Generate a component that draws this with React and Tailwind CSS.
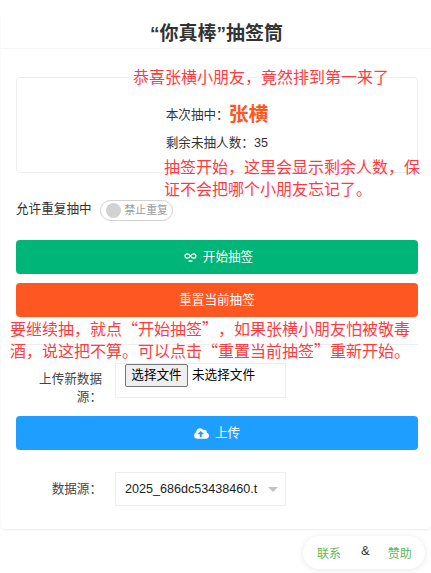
import React from 'react';
import { FaCloudUploadAlt } from 'react-icons/fa';

const font = { fontFamily: '"Liberation Sans", "Noto Sans CJK SC", sans-serif' };

function DrawIcon() {
  return (
    <svg width="13" height="11" viewBox="0 0 13 11" fill="none" stroke="white" strokeWidth="1.3" className="mr-[6px]">
      <path d="M6.5 4C5.6 2.6 4.6 1.8 3.3 1.8A2.2 2.2 0 0 0 3.3 6.2C4.6 6.2 5.6 5.4 6.5 4C7.4 2.6 8.4 1.8 9.7 1.8A2.2 2.2 0 0 1 9.7 6.2C8.4 6.2 7.4 5.4 6.5 4Z" />
      <path d="M4.5 9h4" strokeWidth="1.5" />
    </svg>
  );
}

function Note({ className, children }) {
  return (
    <div className={`absolute font-['Noto_Sans_CJK_SC'] text-[16px] leading-[21.5px] text-[#ff3b3f] [text-spacing-trim:space-all] ${className}`}>{children}</div>
  );
}

export default function App() {
  return (
    <div className="relative h-[573px] w-[431px] overflow-hidden bg-white text-[12.6px] text-[#333]" style={font}>
      <div className="ml-[1px] pt-[13px]">
        <div className="h-[516px] rounded-sm bg-white shadow-[0_1px_2px_0_rgba(0,0,0,0.08)]">
          <div className="flex h-[36px] items-center justify-center border-b border-[#f6f6f6] pt-[8px] pl-[1px] text-[19px] font-bold">
            “你真棒”抽签筒
          </div>

          <div className="pr-[13px] pl-[15px]">
            <div className="mt-[28px] flex h-[96px] flex-col items-center justify-center rounded border border-[#eee]">
              <div className="pt-[2px]">
                <div className="flex h-[30px] items-center pt-[3px]">
                  <span>本次抽中&#xFF1A;</span>
                  <span className="-mt-[2px] text-[19.8px] font-bold text-[#ff5722]">张横</span>
                </div>
                <div className="mt-[4px] leading-[20px]">剩余未抽人数&#xFF1A;35</div>
              </div>
            </div>

            <div className="mt-[27px] flex h-[21px] items-center">
              <span className="mr-[8px] -mt-[3px]">允许重复抽中</span>
              <div className="flex h-[21px] w-[73px] items-center rounded-full border border-[#d2d2d2] pl-[5px]">
                <span className="h-[15px] w-[15px] rounded-full bg-[#d2d2d2]" />
                <span className="ml-[4px] text-[10.8px] whitespace-nowrap text-[#999]">禁止重复</span>
              </div>
            </div>

            <button className="mt-[19px] flex h-[34px] w-full items-center justify-center rounded bg-[#00b578] pl-[3px] text-white">
              <DrawIcon />
              开始抽签
            </button>
            <button className="mt-[9px] flex h-[34px] w-full items-center justify-center rounded bg-[#ff5722] text-white">
              重置当前抽签
            </button>

            <div className="mt-[27px] border-t border-[#eee]" />

            <div className="mt-[18px] flex">
              <div className="ml-[20px] w-[66px] shrink-0 pt-[7px] text-right leading-[18px] text-[#444]">上传新数据源&#xFF1A;</div>
              <div className="ml-[13px] h-[35px] w-[171px] border border-[#eee] pl-[9px]">
                <div className="flex items-center">
                  <span className="flex h-[23px] w-[63px] items-center justify-center rounded-[2px] border border-[#767676] bg-[#efefef] text-black">
                    选择文件
                  </span>
                  <span className="ml-[4px] text-black">未选择文件</span>
                </div>
              </div>
            </div>

            <button className="mt-[10px] flex h-[34px] w-full items-center justify-center rounded bg-[#1e9fff] pt-[1px] text-white">
              <FaCloudUploadAlt className="mr-[6px] text-[15px]" />
              上传
            </button>

            <div className="mt-[22px] flex items-center">
              <div className="w-[86px] shrink-0 text-right leading-[18px] text-[#444]">数据源&#xFF1A;</div>
              <div className="ml-[13px] flex h-[34px] w-[171px] items-center border border-[#eee] pl-[9px]">
                <span className="w-[134px] overflow-hidden whitespace-nowrap text-[#222]">2025_686dc53438460.t</span>
                <span className="ml-[9px] h-0 w-0 border-x-[5px] border-t-[5px] border-x-transparent border-t-[#c2c2c2]" />
              </div>
            </div>
          </div>
        </div>
      </div>

      <div className="absolute top-[536px] left-[303px] flex h-[33px] w-[122px] rounded-full bg-white pl-[14px] text-[12px] shadow-[0_1px_6px_rgba(0,0,0,0.1)]">
        <span className="mt-[9px] text-[#5cb85c]">联系</span>
        <span className="mt-[5px] ml-[20px] text-[13px] text-[#333]">&amp;</span>
        <span className="mt-[9px] ml-[18px] text-[#5cb85c]">赞助</span>
      </div>

      <Note className="top-[66px] left-[133px] whitespace-nowrap">恭喜张横小朋友&#xFF0C;竟然排到第一来了</Note>
      <Note className="top-[156px] left-[164px] w-[260px]">抽签开始&#xFF0C;这里会显示剩余人数&#xFF0C;保证不会把哪个小朋友忘记了。</Note>
      <Note className="top-[318px] left-[10px] w-[404px]">要继续抽&#xFF0C;就点“开始抽签”&#xFF0C;如果张横小朋友怕被敬毒酒&#xFF0C;说这把不算。可以点击“重置当前抽签”重新开始。</Note>
    </div>
  );
}
